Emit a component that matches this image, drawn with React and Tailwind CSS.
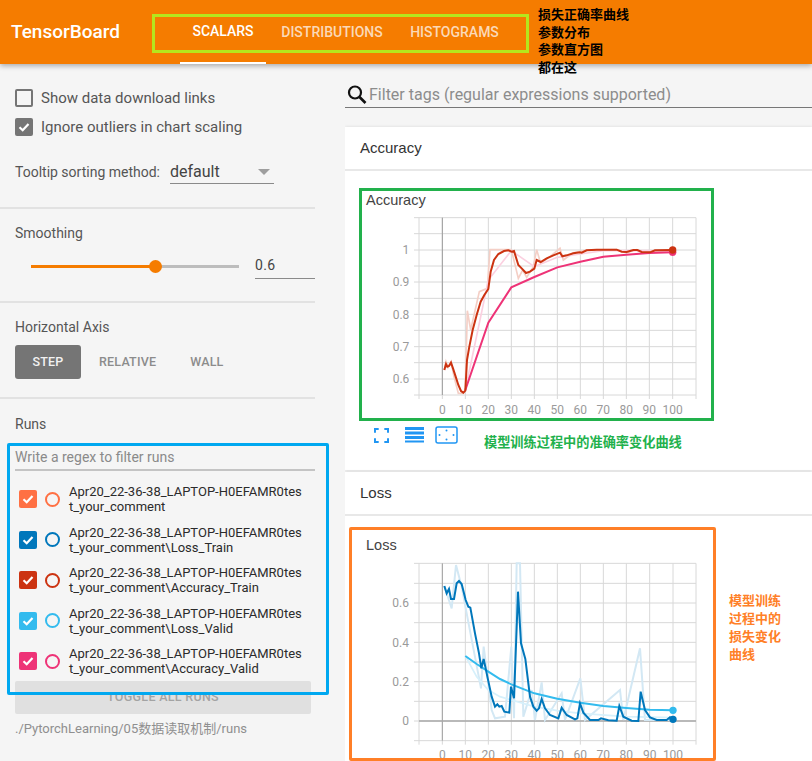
import React from "react";

const RUNS = [
  ["t_your_comment", "#ff7043"],
  ["t_your_comment\\Loss_Train", "#0077bb"],
  ["t_your_comment\\Accuracy_Train", "#cc3311"],
  ["t_your_comment\\Loss_Valid", "#33bbee"],
  ["t_your_comment\\Accuracy_Valid", "#ee3377"],
];

function Check({ color, checked = true }) {
  return (
    <span
      className="flex h-[18px] w-[18px] shrink-0 items-center justify-center rounded-[2px]"
      style={{ background: checked ? color : "transparent", border: checked ? "none" : `2px solid ${color}` }}
    >
      {checked && (
        <svg width="14" height="14" viewBox="0 0 14 14">
          <path d="M2.5 7.2 L5.7 10.2 L11.5 4" fill="none" stroke="#fff" strokeWidth="2.2" />
        </svg>
      )}
    </span>
  );
}

function Grid({ xs, ys, top, bottom, left, right }) {
  return (
    <g stroke="#d8d8d8" strokeWidth="3" fill="none">
      {xs.map((x) => <line key={"x" + x} x1={x} x2={x} y1={top} y2={bottom + 12} />)}
      {ys.map((y) => <line key={"y" + y} x1={left} x2={right} y1={y} y2={y} />)}
    </g>
  );
}

function Labels({ xs, y, items }) {
  return (
    <g fill="#9a9a9a" fontSize="36" textAnchor="middle" fontFamily="Roboto, sans-serif">
      {xs.map((x, i) => <text key={x} x={x} y={y}>{i * 10}</text>)}
      {items.map(([t, yy]) => <text key={t} x="178" y={yy} textAnchor="end">{t}</text>)}
    </g>
  );
}

function AccuracyChart() {
  const xs = [207, 277, 346, 415, 484, 553, 622, 691, 760, 829, 898, 968, 1038];
  const ys = [113, 161, 210, 258, 306, 355, 403, 451, 500, 548, 597, 645];
  return (
    <svg width="370" height="210" viewBox="0 90 1110 630" className="block">
      <Grid xs={xs} ys={ys} top={113} bottom={645} left={192} right={1038} />
      <line x1="277" x2="277" y1="113" y2="645" stroke="#9c9c9c" strokeWidth="3" />
      <Labels xs={xs.slice(1, 12)} y={702} items={[["1", 222], ["0.9", 318], ["0.8", 416], ["0.7", 512], ["0.6", 608]]} />
      <polyline fill="none" stroke="#f4cfc6" strokeWidth="5" points="283,570 288,545 294,562 303,545 312,590 325,640 340,640 346,630 352,392 362,450 388,335 412,325 420,209 484,209 505,295 518,270 530,292 550,260 560,209 572,250 600,230 630,205 640,240 670,218 710,210 800,209 830,218 860,209 880,218 968,210" />
      <polyline fill="none" stroke="#fbd0e0" strokeWidth="5" points="346,630 415,300 484,212 553,260 622,232 691,222 760,212 898,212 968,213" />
      <polyline fill="none" stroke="#ee3377" strokeWidth="6" points="346,630 415,428 484,322 553,291 622,262 691,245 760,230 829,224 898,219 968,217" />
      <polyline fill="none" stroke="#cc3311" strokeWidth="6" points="283,570 288,552 292,560 297,558 303,548 309,565 317,590 325,615 333,633 340,638 346,632 351,540 358,500 368,450 380,405 392,365 403,345 415,327 422,275 432,240 445,222 462,213 475,211 485,215 492,213 505,255 515,265 528,279 540,275 553,266 560,240 572,246 590,235 610,226 630,218 637,229 650,226 670,220 690,217 695,218 710,211 740,209 800,209 815,215 830,216 850,210 862,210 875,216 900,217 915,211 968,210" />
      <circle cx="968" cy="217" r="11" fill="#ee3377" />
      <circle cx="968" cy="210" r="11" fill="#cc3311" />
    </svg>
  );
}

function LossChart() {
  const xs = [222, 292, 361, 430, 499, 568, 637, 706, 775, 844, 914, 984, 1053];
  const ys = [130, 190, 249, 308, 367, 426, 485, 544, 603, 662];
  return (
    <svg width="367" height="206" viewBox="0 105 1101 618" className="block">
      <Grid xs={xs} ys={ys} top={130} bottom={662} left={207} right={1053} />
      <line x1="292" x2="292" y1="130" y2="662" stroke="#a0a0a0" strokeWidth="3" />
      <line x1="222" x2="1053" y1="603" y2="603" stroke="#a8a8a8" strokeWidth="5" />
      <g fill="#9a9a9a" fontSize="36" textAnchor="middle" fontFamily="Roboto, sans-serif">
        {xs.slice(1, 12).map((x, i) => <text key={x} x={x} y="716">{i * 10}</text>)}
        <text x="192" y="262" textAnchor="end">0.6</text>
        <text x="192" y="380" textAnchor="end">0.4</text>
        <text x="192" y="498" textAnchor="end">0.2</text>
        <text x="192" y="616" textAnchor="end">0</text>
      </g>
      <polyline fill="none" stroke="#d3e8f4" strokeWidth="6" points="298,198 320,265 333,135 350,200 365,280 408,505 416,380 440,570 450,595 480,590 499,380 507,595 515,130 525,130 535,590 560,510 570,600 590,487 600,600 650,520 660,600 706,475 720,600 825,510 835,600 885,385 900,600 984,600" />
      <polyline fill="none" stroke="#d6f0fb" strokeWidth="5" points="361,408 395,470 430,510 465,530 499,540 568,560 637,572 706,580 844,590 984,593" />
      <polyline fill="none" stroke="#33bbee" strokeWidth="6" points="361,408 395,432 430,455 465,477 499,493 568,520 637,536 706,548 775,558 844,564 914,569 984,571" />
      <polyline fill="none" stroke="#0077bb" strokeWidth="6" points="298,198 305,220 312,207 318,237 327,237 335,190 342,183 350,192 362,240 370,260 376,263 390,340 402,400 409,445 416,417 425,460 440,530 450,560 457,553 463,560 470,558 478,575 493,578 498,500 507,535 519,215 528,370 541,417 555,530 565,560 575,572 582,565 590,537 600,565 615,585 640,595 650,563 665,585 690,598 697,595 705,550 715,578 735,600 760,600 768,595 790,601 815,602 823,558 835,590 860,602 880,603 887,515 900,570 915,592 935,600 965,600 975,592 984,598" />
      <circle cx="984" cy="571" r="11" fill="#33bbee" />
      <circle cx="984" cy="598" r="11" fill="#0077bb" />
    </svg>
  );
}

function Sidebar() {
  return (
    <aside className="w-[345px] shrink-0 text-[#555]">
      <div className="w-[315px] pl-[15px]">
        <label className="mt-[25px] flex h-[18px] items-center gap-[8px] text-[15px]">
          <span className="h-[18px] w-[18px] rounded-[2px] border-2 border-[#757575]" />
          Show data download links
        </label>
        <label className="mt-[11px] flex h-[18px] items-center gap-[8px] text-[15px]">
          <Check color="#757575" />
          Ignore outliers in chart scaling
        </label>
        <div className="mt-[24px] flex items-center">
          <span className="text-[14px]">Tooltip sorting method:</span>
          <span className="ml-[10px] flex h-[24px] w-[104px] items-center justify-between border-b border-[#8a8a8a] pr-[4px] text-[16px] text-[#444]">
            default
            <span className="h-0 w-0 border-x-[6px] border-t-[6px] border-x-transparent border-t-[#9e9e9e]" />
          </span>
        </div>
      </div>
      <hr className="mt-[23px] w-[315px] border-t-2 border-[#e2e2e2]" />
      <div className="w-[315px] pl-[15px] pt-[15px]">
        <div className="h-[18px] text-[14px] leading-[18px]">Smoothing</div>
        <div className="mt-[11px] flex items-center pl-[16px]">
          <div className="relative h-[3px] w-[208px] bg-[#bdbdbd]">
            <div className="h-[3px] w-[125px] bg-[#f57c00]" />
            <div className="absolute left-[118px] top-[-5px] h-[13px] w-[13px] rounded-full bg-[#f57c00]" />
          </div>
          <span className="ml-[16px] flex h-[26px] w-[60px] items-center border-b border-[#8a8a8a] text-[14px] tracking-[0.4px] text-[#444]">0.6</span>
        </div>
      </div>
      <hr className="mt-[22px] w-[315px] border-t-2 border-[#e2e2e2]" />
      <div className="w-[315px] pl-[15px] pt-[15px]">
        <div className="h-[18px] text-[14px] leading-[18px]">Horizontal Axis</div>
        <div className="mt-[9px] flex h-[34px] items-center text-[12.5px] font-medium tracking-[0.2px] text-[#8c8c8c]">
          <span className="flex h-[34px] w-[66px] items-center justify-center rounded-[3px] bg-[#757575] text-[#f2f2f2]">STEP</span>
          <span className="ml-[18px]">RELATIVE</span>
          <span className="ml-[34px]">WALL</span>
        </div>
      </div>
      <hr className="mt-[18px] w-[315px] border-t-2 border-[#e2e2e2]" />
      <div className="w-[315px] pl-[15px]">
        <div className="mt-[16px] h-[18px] text-[14px] leading-[18px]">Runs</div>
        <div className="mt-[16px] h-[20px] text-[14px] leading-[16px] text-[#8a8a8a]">Write a regex to filter runs</div>
        <div className="h-[2px] w-[300px] bg-[#c4c4c4]" />
        <div className="mt-[13px] flex flex-col gap-[10px]">
          {RUNS.map(([tail, color]) => (
            <div key={color} className="flex h-[30.5px] items-center pl-[4px]">
              <Check color={color} />
              <span className="ml-[8px] h-[15px] w-[15px] shrink-0 rounded-full border-2 bg-transparent" style={{ borderColor: color }} />
              <div className="ml-[9px] text-[13px] leading-[15px] whitespace-nowrap text-[#2b2b2b]">
                <div>Apr20_22-36-38_LAPTOP-H0EFAMR0tes</div>
                <div>{tail}</div>
              </div>
            </div>
          ))}
        </div>
        <div className="mt-[4px] flex h-[33px] w-[296px] items-center justify-center rounded-[2px] bg-[#e0e0e0] text-[12.5px] font-medium tracking-[0.3px] text-[#a3a3a3]">TOGGLE ALL RUNS</div>
        <div className="mt-[5px] text-[13px] text-[#8f8f8f]">./PytorchLearning/05数据读取机制/runs</div>
      </div>
    </aside>
  );
}

function CardHeader({ children }) {
  return (
    <div
      className="flex h-[44px] items-center border-b-2 border-[#e8e8e8] bg-white pl-[15px] text-[15px] text-[#333]"
      style={{ fontFamily: '"Liberation Sans", sans-serif' }}
    >
      {children}
    </div>
  );
}

function Main() {
  return (
    <main className="flex-1 overflow-hidden">
      <div className="mt-[18px] flex h-[26px] items-center border-b border-[#777]">
        <svg width="22" height="22" viewBox="0 0 22 22" className="ml-[1px]">
          <circle cx="9" cy="8.5" r="6" fill="none" stroke="#111" strokeWidth="2.2" />
          <line x1="13.5" y1="13" x2="19.5" y2="19" stroke="#111" strokeWidth="2.6" />
        </svg>
        <span className="ml-[1px] text-[16px] text-[#8c8c8c]">Filter tags (regular expressions supported)</span>
      </div>
      <section className="mt-[19px] h-[343px] bg-white shadow-[0_0_3px_rgba(0,0,0,0.12)]">
        <CardHeader>Accuracy</CardHeader>
        <div className="pl-[21px] pt-[21px] text-[14.5px] leading-[16px] text-[#444]" style={{ fontFamily: '"Liberation Sans", sans-serif' }}>Accuracy</div>
        <div className="ml-[5px] mt-[2px]"><AccuracyChart /></div>
        <div className="mt-[4px] flex h-[22px] items-center pl-[29px]">
          <svg width="15" height="15" viewBox="0 0 16 16" fill="none" stroke="#2196f3" strokeWidth="2.2">
            <path d="M1 5V1H5M11 1H15V5M15 11V15H11M5 15H1V11" />
          </svg>
          <svg width="19" height="16" viewBox="0 0 19 16" className="ml-[16px]" fill="#2196f3">
            <rect y="0" width="19" height="3" />
            <rect y="4.500" width="19" height="3" />
            <rect y="9" width="19" height="3" />
            <rect y="13.500" width="19" height="2" />
          </svg>
          <svg width="23" height="18" viewBox="0 0 23 18" className="ml-[11px]" fill="#2196f3">
            <rect x="1" y="1" width="21" height="16" rx="2" fill="none" stroke="#2196f3" strokeWidth="1.500" />
            <circle cx="11.500" cy="4.500" r="1" />
            <circle cx="11.500" cy="13.500" r="1" />
            <circle cx="4.500" cy="9" r="1" />
            <circle cx="18.500" cy="9" r="1" />
          </svg>
        </div>
      </section>
      <section className="mt-[2px] bg-white shadow-[0_0_3px_rgba(0,0,0,0.12)]">
        <CardHeader>Loss</CardHeader>
        <div className="pl-[21px] pt-[21px] text-[14.5px] leading-[16px] text-[#444]" style={{ fontFamily: '"Liberation Sans", sans-serif' }}>Loss</div>
        <div className="mt-[2px]"><LossChart /></div>
      </section>
    </main>
  );
}

export default function App() {
  return (
    <div className="relative h-[761px] w-[812px] overflow-hidden bg-[#f5f5f5]" style={{ fontFamily: 'Roboto, "Noto Sans CJK SC", sans-serif' }}>
      <header className="relative z-10 flex h-[64px] bg-[#f57c00] shadow-[0_2px_5px_rgba(0,0,0,0.3)]">
        <div className="flex h-[64px] w-[180px] items-center pl-[11px] text-[19px] font-medium text-white">TensorBoard</div>
        <nav className="flex text-[14px] font-medium">
          <span className="flex h-[64px] w-[86px] items-center justify-center border-b-2 border-white pt-[1px] text-white">SCALARS</span>
          <span className="flex h-[64px] w-[132px] items-center justify-center pt-[1px] text-[#fbd9b8]">DISTRIBUTIONS</span>
          <span className="flex h-[64px] w-[113px] items-center justify-center pt-[1px] text-[#fbd9b8]">HISTOGRAMS</span>
        </nav>
      </header>
      <div className="flex h-[697px]">
        <Sidebar />
        <Main />
      </div>

      {/* annotation overlays */}
      <div className="absolute left-[152px] top-[14px] z-20 h-[39px] w-[377px] border-[3px] border-[#b5e61d]" />
      <div className="absolute left-[538px] top-[6px] z-20 text-[13px] font-bold leading-[17.5px] text-black">
        <div>损失正确率曲线</div>
        <div>参数分布</div>
        <div>参数直方图</div>
        <div>都在这</div>
      </div>
      <div className="absolute left-[7px] top-[443px] z-20 h-[252px] w-[322px] rounded-[2px] border-[3px] border-[#00a8f0]" />
      <div className="absolute left-[359px] top-[188px] z-20 h-[233px] w-[355px] border-[3px] border-[#22b14c]" />
      <div className="absolute left-[484px] top-[434px] z-20 text-[13.2px] font-bold leading-[18px] text-[#22b14c]">模型训练过程中的准确率变化曲线</div>
      <div className="absolute left-[349px] top-[527px] z-20 h-[234px] w-[367px] rounded-[2px] border-[3px] border-[#ff7f27]" />
      <div className="absolute left-[729px] top-[592px] z-20 w-[56px] text-[13px] font-bold leading-[18px] text-[#ff7f27]">模型训练过程中的损失变化曲线</div>
    </div>
  );
}
